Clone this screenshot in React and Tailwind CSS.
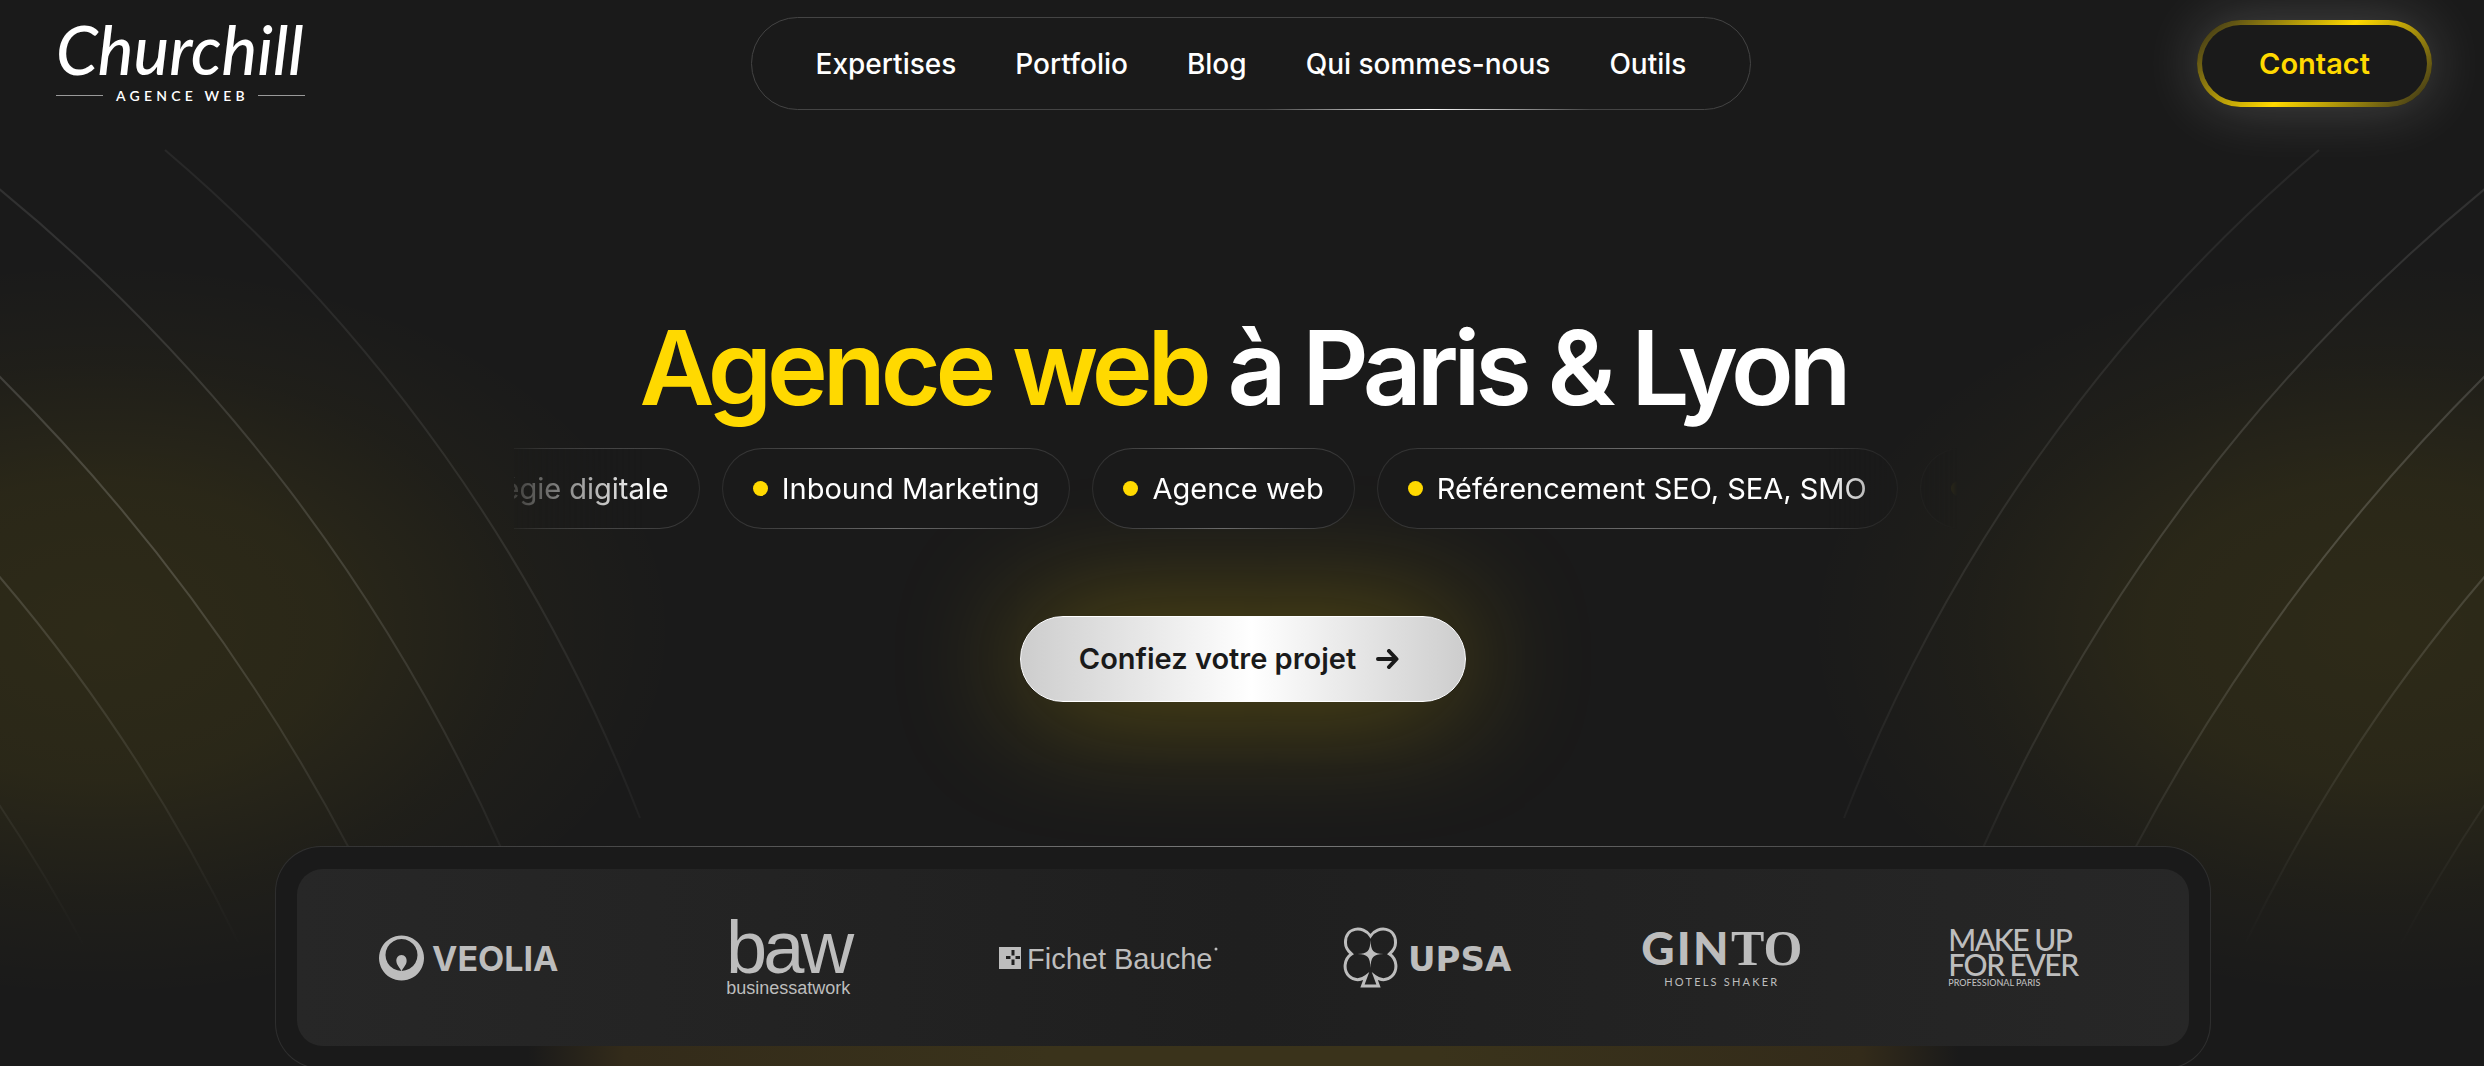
const navLinks = [
  { label: 'Expertises', href: '#expertises' },
  { label: 'Portfolio', href: '#portfolio' },
  { label: 'Blog', href: '#blog' },
  { label: 'Qui sommes-nous', href: '#qui-sommes-nous', active: true },
  { label: 'Outils', href: '#outils' },
];

const services = [
  'Stratégie digitale',
  'Inbound Marketing',
  'Agence web',
  'Référencement SEO, SEA, SMO',
  'Création de site internet',
];

const arcs = [
  { d: 'M165 150 A1676 1676 0 0 1 640 818', opacity: 0.5 },
  { d: 'M-2 188 A1800 1800 0 0 1 502 850', opacity: 0.8 },
  { d: 'M-2 375 A1966 1966 0 0 1 350 850', opacity: 1 },
  { d: 'M-2 575 A1700 1700 0 0 1 238 942', opacity: 0.9 },
  { d: 'M-2 803 A1700 1700 0 0 1 84 946', opacity: 0.8 },
];

function Arcs({ flip }) {
  const id = flip ? 'arc-right' : 'arc-left';

  return (
    <svg
      width="700"
      height="960"
      viewBox="0 0 700 960"
      fill="none"
      aria-hidden="true"
      className={flip ? 'absolute top-0 right-0 -scale-x-100' : 'absolute top-0 left-0'}
    >
      <defs>
        <linearGradient id={id} x1="0" y1="150" x2="0" y2="950" gradientUnits="userSpaceOnUse">
          <stop offset="0" stopColor="#fff" stopOpacity="0.12" />
          <stop offset="0.5" stopColor="#fff" stopOpacity="0.17" />
          <stop offset="0.8" stopColor="#fff" stopOpacity="0.08" />
          <stop offset="1" stopColor="#fff" stopOpacity="0" />
        </linearGradient>
      </defs>
      {arcs.map((arc) => (
        <path key={arc.d} d={arc.d} stroke={`url(#${id})`} strokeWidth="2" opacity={arc.opacity} />
      ))}
    </svg>
  );
}

function Background() {
  return (
    <div aria-hidden="true" className="pointer-events-none absolute inset-0">
      <div className="absolute inset-0 bg-[radial-gradient(ellipse_580px_370px_at_100px_630px,rgba(255,215,0,0.085),rgba(255,215,0,0.07)_40%,rgba(255,215,0,0.025)_72%,transparent)]" />
      <div className="absolute inset-0 bg-[radial-gradient(ellipse_580px_370px_at_calc(100%-100px)_630px,rgba(255,215,0,0.085),rgba(255,215,0,0.07)_40%,rgba(255,215,0,0.025)_72%,transparent)]" />
      <Arcs />
      <Arcs flip />
    </div>
  );
}

function Logo() {
  return (
    <a href="#accueil" className="flex w-[249px] shrink-0 flex-col">
      <span className="font-['Lato',sans-serif] text-[67px] leading-[48px] font-medium italic">Churchill</span>
      <span className="mt-4 flex items-center justify-between">
        <span className="h-px w-[47px] bg-[#999]" />
        <span className="pl-1 font-['Lato',sans-serif] text-[14px] leading-[14px] font-semibold tracking-[0.3em]">AGENCE WEB</span>
        <span className="h-px w-[47px] bg-[#999]" />
      </span>
    </a>
  );
}

function Header() {
  return (
    <header className="relative flex items-center justify-between pt-[17px] pr-[52px] pl-14">
      <Logo />
      <nav className="flex h-[93px] items-stretch gap-[59px] rounded-full border border-[#444] bg-[#1a1a1a] px-16 text-[28px] font-medium">
        {navLinks.map((link) => (
          <a key={link.label} href={link.href} className="relative flex items-center whitespace-nowrap">
            {link.label}
            {link.active && (
              <span className="absolute -inset-x-10 -bottom-px h-px bg-linear-to-r from-transparent via-white to-transparent" />
            )}
          </a>
        ))}
      </nav>
      <button className="h-[87px] w-[235px] rounded-full border-[5px] border-transparent text-[29px] font-semibold text-[#ffd900] shadow-[0_0_60px_rgba(255,255,255,0.2)] [background:linear-gradient(#1a1a1a,#1a1a1a)_padding-box,linear-gradient(135deg,#2e2a1a,#ffd900_50%,#2e2a1a)_border-box]">
        Contact
      </button>
    </header>
  );
}

function Services() {
  return (
    <div className="relative z-10 mt-[18px] w-full max-w-[1458px] overflow-hidden [mask-image:linear-gradient(90deg,rgba(0,0,0,0.15),#000_9%,#000_90%,transparent_99%)]">
      <ul className="-ml-[136px] flex gap-[22px] text-[29px]">
        {services.map((service) => (
          <li
            key={service}
            className="flex h-[81px] shrink-0 items-center gap-[14px] rounded-full border border-transparent px-[30px] whitespace-nowrap [background:linear-gradient(#1a1a1a,#1a1a1a)_padding-box,linear-gradient(90deg,#2e2e2e,#6b6b6b_50%,#2e2e2e)_border-box]"
          >
            <span className="size-[15px] rounded-full bg-[#ffd900]" />
            {service}
          </li>
        ))}
      </ul>
    </div>
  );
}

function Veolia() {
  return (
    <svg width="184" height="48" viewBox="0 0 184 48" fill="currentColor" role="img" aria-label="Veolia">
      <path fillRule="evenodd" d="M22.500 1.500 a22.500 22.500 0 1 0 0.010 0 Z M22.500 5 a16 16 0 1 1 -0.010 0 Z" />
      <path d="M22.500 21 C26 21 28 24 27.600 27.500 C27.200 31.500 24 33.500 22.500 37.500 C21 33.500 17.800 31.500 17.400 27.500 C17 24 19 21 22.500 21 Z" />
      <text x="53" y="37" className="font-['Inter',sans-serif] text-[34px] font-bold">VEOLIA</text>
    </svg>
  );
}

function Baw() {
  return (
    <div className="flex flex-col items-center font-['Liberation_Sans',sans-serif]">
      <span className="text-[74px] leading-[60px] tracking-tighter">baw</span>
      <span className="text-[18px] leading-[20px]">businessatwork</span>
    </div>
  );
}

function Fichet() {
  return (
    <svg width="220" height="36" viewBox="0 0 220 36" fill="currentColor" role="img" aria-label="Fichet Bauche">
      <path
        fillRule="evenodd"
        d="M0 7 H22 V29 H0 Z M12.500 10 V15.500 H15.500 V10 Z M12.500 19.500 V25 H15.500 V19.500 Z M7 16 V19 H11.500 V16 Z M16.500 16 V19 H21 V16 Z"
      />
      <text x="28" y="29" className="font-['Liberation_Sans',sans-serif] text-[29px]">Fichet Bauche</text>
      <circle cx="217" cy="9" r="1.500" />
    </svg>
  );
}

function Upsa() {
  return (
    <svg width="172" height="64" viewBox="0 0 172 64" fill="currentColor" role="img" aria-label="UPSA">
      <path
        d="M27.500 10 C20 -1 2 1 2.500 17 C2.500 22 5 25 8.500 28 C1 33 0 44 6 50 C11 55 18 54.500 23 50.500 L19.500 60 H35.500 L32 50.500 C37 54.500 44 55 49 50 C55 44 54 33 46.500 28 C50 25 52.500 22 52.500 17 C53 1 35 -1 27.500 10 Z"
        fill="none"
        stroke="currentColor"
        strokeWidth="3"
      />
      <path d="M27.500 14 C28 25 30 27.500 40.500 28 C30 28.500 28 31 27.500 42 C27 31 25 28.500 14.500 28 C25 27.500 27 25 27.500 14 Z" />
      <text x="65" y="45" className="font-['DejaVu_Sans',sans-serif] text-[34px] font-bold">UPSA</text>
    </svg>
  );
}

function Ginto() {
  return (
    <div className="flex flex-col items-center">
      <span className="flex items-baseline leading-[40px]">
        <span className="font-['Lato',sans-serif] text-[46px] font-black tracking-wider">GIN</span>
        <span className="font-['Liberation_Serif',serif] text-[50px] font-bold">TO</span>
      </span>
      <span className="mt-2 font-['Lato',sans-serif] text-[11px] leading-[12px] tracking-[0.2em]">HOTELS SHAKER</span>
    </div>
  );
}

function MakeUp() {
  return (
    <div className="flex flex-col font-['Lato',sans-serif]">
      <span className="text-[30px] leading-[25px] font-medium tracking-tighter">MAKE UP</span>
      <span className="text-[30px] leading-[25px] font-medium tracking-tighter">FOR EVER</span>
      <span className="text-[9px] leading-[12px] font-medium">PROFESSIONAL PARIS</span>
    </div>
  );
}

function Clients() {
  return (
    <section
      aria-label="Nos clients"
      className="relative mt-36 -mb-1 w-[78%] overflow-hidden rounded-[46px] border border-transparent px-[21px] py-[22px] [background:linear-gradient(#1a1a1a,#1a1a1a)_padding-box,linear-gradient(90deg,#2e2e2e,#7a7a7a_50%,#2e2e2e)_border-box]"
    >
      <div className="absolute inset-x-0 bottom-0 h-10 bg-[linear-gradient(90deg,transparent_13%,#332b1a_18%,#3a331b_40%,#3a331b_60%,#332b1a_82%,transparent_87%)]" />
      <div className="relative flex h-[177px] items-center justify-between rounded-[26px] bg-[linear-gradient(90deg,#272727,#1f1f1f_50%,#272727)] px-[68px] text-[#bdbdbd]">
        <div className="flex w-[212px] justify-center"><Veolia /></div>
        <div className="flex w-[224px] justify-center"><Baw /></div>
        <div className="flex w-[220px] justify-center"><Fichet /></div>
        <div className="flex w-[220px] justify-center"><Upsa /></div>
        <div className="flex w-[168px] justify-center"><Ginto /></div>
        <div className="flex w-[216px] justify-center"><MakeUp /></div>
      </div>
    </section>
  );
}

export default function App() {
  return (
    <div className="relative min-h-screen overflow-hidden bg-[#1a1a1a] font-['Inter',sans-serif] text-white">
      <Background />
      <Header />
      <main className="relative flex flex-col items-center pt-[196px] pl-0.5">
        <h1 className="text-[103px] leading-[124px] font-semibold tracking-tighter">
          <span className="text-[#ffd900]">Agence web</span> à Paris &amp; Lyon
        </h1>
        <Services />
        <button className="mt-[87px] flex h-[86px] items-center gap-5 rounded-full border border-white bg-[linear-gradient(90deg,#cdcdcd,#fff_52%,#cdcdcd)] pr-[66px] pl-[58px] text-[29px] font-semibold text-[#1a1a1a] shadow-[0_0_130px_rgba(255,215,0,0.35)]">
          Confiez votre projet
          <svg width="23" height="20" viewBox="0 0 23 20" fill="none" stroke="currentColor" strokeWidth="4" strokeLinecap="round" strokeLinejoin="round" aria-hidden="true">
            <path d="M2 10 H20 M13 2 L20.500 10 L13 18" />
          </svg>
        </button>
        <Clients />
      </main>
    </div>
  );
}
